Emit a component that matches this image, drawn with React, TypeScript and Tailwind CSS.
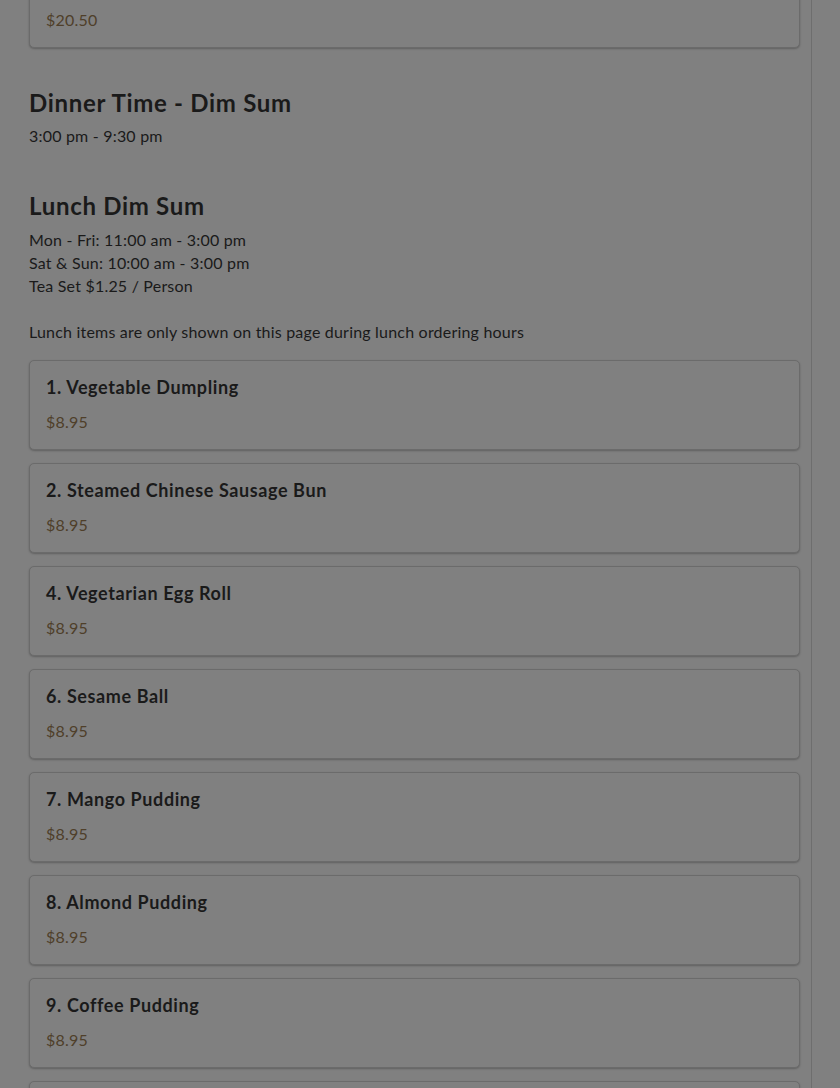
import React from "react";

const items = [
  "1. Vegetable Dumpling",
  "2. Steamed Chinese Sausage Bun",
  "4. Vegetarian Egg Roll",
  "6. Sesame Ball",
  "7. Mango Pudding",
  "8. Almond Pudding",
  "9. Coffee Pudding",
  "10. Egg Tart",
];

function ItemCard({ name, price }: { name: string; price: string }) {
  return (
    <div className="h-[90px] rounded-[5px] border border-[#6b6b6b] bg-[#808080] px-4 pt-[12px] shadow-[0_1px_2px_rgba(0,0,0,0.25)]">
      <div className="text-[18px] font-bold leading-[28px] tracking-[0.6px] text-[#1a1a1a]">{name}</div>
      <div className="mt-[9px] text-[16px] leading-[24px] tracking-[0.2px] text-[#4f3f2a]">{price}</div>
    </div>
  );
}

export default function App() {
  return (
    <div className="min-h-[1088px] overflow-hidden bg-[#808080]" style={{ fontFamily: "Lato, 'Noto Sans', sans-serif" }}>
      <div className="h-[1088px] w-[812px] overflow-hidden border-r border-[#6e6e6e] pl-[29px] pr-[11px]">
        <div className="-mt-[42px]">
          <ItemCard name="Special Combo" price="$20.50" />
        </div>

        <h2 className="mt-[40px] text-[24px] font-bold leading-[30px] tracking-[0.7px] text-[#1a1a1a]">Dinner Time - Dim Sum</h2>
        <p className="mt-[6px] text-[16px] leading-[23px] tracking-[0.2px] text-[#1a1a1a]">3:00 pm - 9:30 pm</p>

        <h2 className="mt-[44px] text-[24px] font-bold leading-[30px] tracking-[0.7px] text-[#1a1a1a]">Lunch Dim Sum</h2>
        <div className="mt-[7px] text-[16px] leading-[23px] tracking-[0.2px] text-[#1a1a1a]">
          <p>Mon - Fri: 11:00 am - 3:00 pm</p>
          <p>Sat &amp; Sun: 10:00 am - 3:00 pm</p>
          <p>Tea Set $1.25 / Person</p>
          <p className="mt-[23px]">Lunch items are only shown on this page during lunch ordering hours</p>
        </div>

        <div className="mt-[17px] flex flex-col gap-[13px]">
          {items.map((n) => (
            <ItemCard key={n} name={n} price="$8.95" />
          ))}
        </div>
      </div>
    </div>
  );
}
